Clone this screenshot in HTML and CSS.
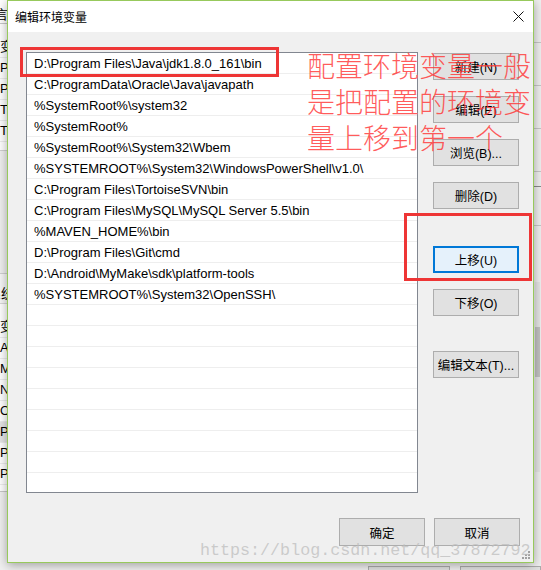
FILE: index.html
```html
<!DOCTYPE html>
<html lang="zh-CN">
<head>
<meta charset="utf-8">
<title>编辑环境变量</title>
<link rel="stylesheet" href="styles.css">
</head>
<body>
<div class="desktop">
  <div class="backwin-left">
    <div class="bl-top"><span class="cut">言</span></div>
    <div class="bl-rows">
      <div class="bl-row">变量</div>
      <div class="bl-row">Path</div>
      <div class="bl-row">PTHON</div>
      <div class="bl-row">TEMP</div>
      <div class="bl-row">TMP</div>
    </div>
    <div class="bl-gray"></div>
    <div class="bl-label"><span class="cut2">系统变量</span></div>
    <div class="bl-rows">
      <div class="bl-row">变量</div>
      <div class="bl-row">ANDROID</div>
      <div class="bl-row">MAVEN</div>
      <div class="bl-row">NUMBER</div>
      <div class="bl-row">OS</div>
      <div class="bl-row sel">Path</div>
      <div class="bl-row">PATHEXT</div>
      <div class="bl-row">PROCESSOR</div>
    </div>
    <div class="bl-rest"></div>
  </div>
  <div class="backwin-right">
    <div class="br-line"></div>
    <div class="br-line"></div>
    <div class="br-line"></div>
    <div class="br-line"></div>
    <div class="br-band"></div>
    <div class="br-track"><div class="br-thumb"></div></div>
  </div>
  <div class="backwin-bottom">
    <div class="bb-btn"></div>
    <div class="bb-btn"></div>
  </div>

  <div class="dialog">
    <div class="titlebar">
      <span class="title">编辑环境变量</span>
      <svg class="close" width="11" height="11" viewBox="0 0 11 11"><path d="M0.5 0.5 L10.5 10.5 M10.5 0.5 L0.5 10.5" stroke="#111" stroke-width="1" fill="none"/></svg>
    </div>
    <div class="body">
      <div class="main">
        <div class="list">
          <div class="row first">D:\Program Files\Java\jdk1.8.0_161\bin</div>
          <div class="row">C:\ProgramData\Oracle\Java\javapath</div>
          <div class="row">%SystemRoot%\system32</div>
          <div class="row">%SystemRoot%</div>
          <div class="row">%SystemRoot%\System32\Wbem</div>
          <div class="row">%SYSTEMROOT%\System32\WindowsPowerShell\v1.0\</div>
          <div class="row">C:\Program Files\TortoiseSVN\bin</div>
          <div class="row">C:\Program Files\MySQL\MySQL Server 5.5\bin</div>
          <div class="row">%MAVEN_HOME%\bin</div>
          <div class="row">D:\Program Files\Git\cmd</div>
          <div class="row">D:\Android\MyMake\sdk\platform-tools</div>
          <div class="row">%SYSTEMROOT%\System32\OpenSSH\</div>
          <div class="row"></div>
          <div class="row"></div>
          <div class="row"></div>
          <div class="row"></div>
          <div class="row"></div>
          <div class="row"></div>
          <div class="row"></div>
          <div class="row"></div>
          <div class="row last"></div>
        </div>
        <div class="buttons">
          <div class="btn">新建(N)</div>
          <div class="btn">编辑(E)</div>
          <div class="btn">浏览(B)...</div>
          <div class="btn">删除(D)</div>
          <div class="btn default gap-lg">上移(U)</div>
          <div class="btn">下移(O)</div>
          <div class="btn gap-xl">编辑文本(T)...</div>
        </div>
      </div>
      <div class="footer">
        <div class="btn big">确定</div>
        <div class="btn big">取消</div>
      </div>
    </div>
    <svg class="grip" width="9" height="9" viewBox="0 0 9 9">
      <rect x="7" y="1" width="2" height="2" fill="#a0a0a0"/>
      <rect x="4" y="4" width="2" height="2" fill="#a0a0a0"/>
      <rect x="7" y="4" width="2" height="2" fill="#a0a0a0"/>
      <rect x="1" y="7" width="2" height="2" fill="#a0a0a0"/>
      <rect x="4" y="7" width="2" height="2" fill="#a0a0a0"/>
      <rect x="7" y="7" width="2" height="2" fill="#a0a0a0"/>
    </svg>
  </div>

  <div class="mark mark-first"></div>
  <div class="mark mark-up"></div>
  <div class="note">配置环境变量一般<br>是把配置的环境变<br>量上移到第一个</div>
  <div class="watermark">https://blog.csdn.net/qq_37872792</div>
</div>
</body>
</html>
```

FILE: styles.css
```css
* { box-sizing: border-box; }

body {
  margin: 0;
  background: #f0f0f0;
  font-family: "Liberation Sans", "Noto Sans CJK SC", sans-serif;
  font-size: 12px;
  color: #000;
}

.desktop {
  position: relative;
  width: 541px;
  height: 570px;
  overflow: hidden;
  background: #f0f0f0;
}

/* windows behind the dialog */
.backwin-left {
  position: absolute;
  left: 0;
  top: 0;
  width: 60px;
  height: 570px;
  background: #fff;
  display: flex;
  flex-direction: column;
  white-space: nowrap;
  overflow: hidden;
  font-size: 13px;
}
.bl-top {
  height: 24px;
  flex: none;
  border-bottom: 1px solid #c8c8c8;
  line-height: 30px;
}
.cut { position: relative; left: -5px; }
.bl-rows { display: flex; flex-direction: column; padding-top: 13px; flex: none; }
.bl-row {
  height: 21px;
  line-height: 20px;
  border-bottom: 1px solid #ececec;
}
.bl-row.sel { background: #e5e5e5; }
.bl-gray {
  height: 124px;
  flex: none;
  margin-top: 8px;
  background: #f0f0f0;
  border-top: 1px solid #d0d0d0;
  border-bottom: 1px solid #d0d0d0;
}
.bl-label {
  height: 30px;
  flex: none;
  line-height: 40px;
  background: #f7f7f7;
  border-bottom: 1px solid #d8d8d8;
}
.cut2 { position: relative; left: -12px; }
.bl-rest {
  flex: 1;
  margin-top: 6px;
  background: #f0f0f0;
  border-top: 1px solid #c8c8c8;
}

.backwin-right {
  position: absolute;
  left: 533px;
  top: 0;
  width: 8px;
  height: 570px;
  background: #f0f0f0;
  display: flex;
  flex-direction: column;
}
.br-line { height: 43px; flex: none; border-bottom: 1px solid #c8c8c8; }
.br-band { height: 40px; flex: none; margin-top: 14px; border-top: 1px solid #8a8a8a; border-bottom: 1px solid #c8c8c8; }
.br-track { margin-top: 56px; height: 190px; width: 5px; margin-left: 2px; background: #e6e6e6; }
.br-thumb { margin-top: 45px; height: 50px; background: #c2c2c2; }

.backwin-bottom {
  position: absolute;
  left: 0;
  top: 563px;
  width: 541px;
  height: 7px;
  display: flex;
  padding-left: 368px;
  gap: 10px;
  padding-top: 3px;
}
.bb-btn { width: 86px; height: 20px; border: 1px solid #adadad; background: #e1e1e1; }

/* dialog */
.dialog {
  position: absolute;
  left: 7px;
  top: 0;
  width: 527px;
  height: 563px;
  border: 1px solid #97c95c;
  background: #f0f0f0;
  box-shadow: 0 2px 10px rgba(0, 0, 0, 0.35);
  display: flex;
  flex-direction: column;
}

.titlebar {
  height: 31px;
  flex: none;
  background: #fff;
  display: flex;
  align-items: center;
  justify-content: space-between;
  padding: 0 9px 0 7px;
}
.title { font-family: "Noto Sans CJK SC", sans-serif; font-size: 12px; line-height: 16px; }
.close { display: block; }

.body {
  flex: 1;
  padding: 20px 13px 0 18px;
  display: flex;
  flex-direction: column;
}

.main { display: flex; gap: 15px; }

.list {
  width: 392px;
  height: 441px;
  border: 1px solid #828790;
  background: #fff;
  overflow: hidden;
  display: flex;
  flex-direction: column;
}
.row {
  height: 21px;
  flex: none;
  border-bottom: 1px solid #eeeeee;
  padding: 1px 0 0 7px;
  line-height: 19px;
  font-size: 13px;
  white-space: nowrap;
  overflow: hidden;
}
.row.last { border-bottom: none; }

.buttons {
  width: 86px;
  display: flex;
  flex-direction: column;
  padding-top: 1px;
}
.btn {
  height: 27px;
  flex: none;
  border: 1px solid #adadad;
  background: #e1e1e1;
  display: flex;
  align-items: center;
  justify-content: center;
  font-family: "Liberation Sans", "Noto Sans CJK SC", sans-serif;
  font-size: 12.5px;
  white-space: nowrap;
}
.buttons .btn + .btn { margin-top: 16px; }
.buttons .btn.gap-lg { margin-top: 37px; }
.buttons .btn.gap-xl { margin-top: 35px; }
.btn.default {
  border: 1px solid #0078d7;
  box-shadow: inset 0 0 0 1px #0078d7;
  background: #e5f1fb;
}

.footer {
  margin-top: 25px;
  display: flex;
  justify-content: flex-end;
  gap: 9px;
}
.btn.big { width: 86px; height: 28px; }

.grip { position: absolute; right: 3px; bottom: 3px; }

/* annotations over the screenshot */
.mark {
  position: absolute;
  border: 3px solid #ee3535;
}
.mark-first { left: 20px; top: 47px; width: 259px; height: 30px; }
.mark-up { left: 404px; top: 213px; width: 128px; height: 68px; }

.note {
  position: absolute;
  left: 307px;
  top: 47px;
  font-family: "Noto Sans CJK SC", sans-serif;
  font-weight: 300;
  font-size: 28px;
  line-height: 36px;
  color: rgba(255, 55, 55, 0.82);
  white-space: nowrap;
}

.watermark {
  position: absolute;
  left: 200px;
  top: 541px;
  font-family: "Liberation Mono", monospace;
  font-size: 16.7px;
  line-height: 20px;
  color: rgba(190, 190, 190, 0.75);
  white-space: nowrap;
}
```
